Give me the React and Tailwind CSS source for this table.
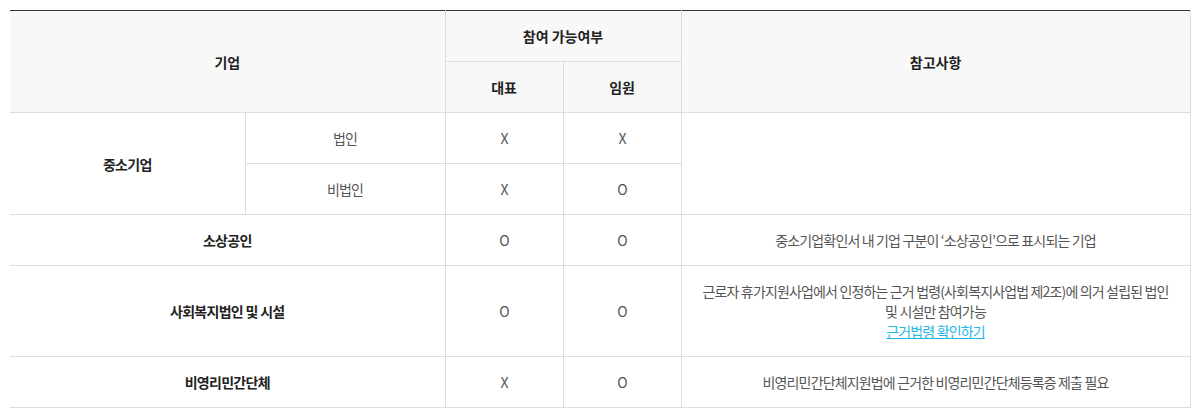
import React from 'react';

const FONT = { fontFamily: '"Noto Sans CJK KR", "Noto Sans", sans-serif' };

const th = 'bg-[#f8f8f8] border-r border-b border-[#dddddd] font-bold text-[#222222] text-center align-middle py-[15px] leading-5';
const head = 'border-r border-b border-[#dddddd] font-bold text-[#222222] text-center align-middle py-[15px] leading-5 tracking-[-0.7px]';
const td = 'border-r border-b border-[#dddddd] text-[#555555] text-center align-middle py-[15px] px-2 leading-5 tracking-[-0.85px]';

const rows = [
    { name: '소상공인', ceo: 'O', exec: 'O', note: '중소기업확인서 내 기업 구분이 ‘소상공인’으로 표시되는 기업' },
    {
        name: '사회복지법인 및 시설',
        ceo: 'O',
        exec: 'O',
        note: (
            <>
                근로자 휴가지원사업에서 인정하는 근거 법령(사회복지사업법 제2조)에 의거 설립된 법인
                <br />
                및 시설만 참여가능
                <br />
                <a href="#" className="text-[#22b8e9] underline">근거법령 확인하기</a>
            </>
        ),
    },
    { name: '비영리민간단체', ceo: 'X', exec: 'O', note: '비영리민간단체지원법에 근거한 비영리민간단체등록증 제출 필요' },
];

const App = () => {
    return (
        <div className="bg-white p-[10px] min-h-[418px]" style={FONT}>
            <table className="w-[1180px] table-fixed border-collapse border-t border-t-[#333333] text-[14px]">
                <colgroup>
                    <col className="w-[235px]" />
                    <col className="w-[200px]" />
                    <col className="w-[118px]" />
                    <col className="w-[118px]" />
                    <col className="w-[509px]" />
                </colgroup>
                <thead>
                    <tr>
                        <th colSpan={2} rowSpan={2} className={th}>기업</th>
                        <th colSpan={2} className={th}>참여 가능여부</th>
                        <th rowSpan={2} className={th}>참고사항</th>
                    </tr>
                    <tr>
                        <th className={th}>대표</th>
                        <th className={th}>임원</th>
                    </tr>
                </thead>
                <tbody>
                    {/* 중소기업 */}
                    <tr>
                        <td rowSpan={2} className={head}>중소기업</td>
                        <td className={td}>법인</td>
                        <td className={td}>X</td>
                        <td className={td}>X</td>
                        <td rowSpan={2} className={td}></td>
                    </tr>
                    <tr>
                        <td className={td}>비법인</td>
                        <td className={td}>X</td>
                        <td className={td}>O</td>
                    </tr>
                    {rows.map((r) => (
                        <tr key={r.name}>
                            <td colSpan={2} className={head}>{r.name}</td>
                            <td className={td}>{r.ceo}</td>
                            <td className={td}>{r.exec}</td>
                            <td className={td}>{r.note}</td>
                        </tr>
                    ))}
                </tbody>
            </table>
        </div>
    );
};

export default App;
